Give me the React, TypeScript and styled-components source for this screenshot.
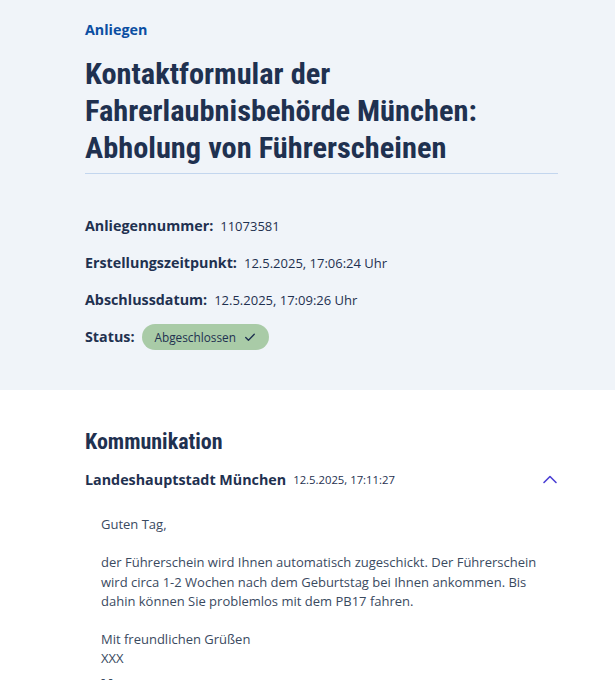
import React from "react";
import styled, { createGlobalStyle } from "styled-components";

const GlobalStyle = createGlobalStyle`
  html, body {
    margin: 0;
    padding: 0;
    background: #ffffff;
  }
  body {
    font-family: "Open Sans", "Noto Sans", sans-serif;
    color: #1f3150;
  }
`;

const Header = styled.section`
  background: #f0f4f9;
  padding: 20px 57px 43px 85px;
`;

const Kicker = styled.div`
  font-size: 14.3px;
  font-weight: 700;
  color: #0b4ea2;
  line-height: 20px;
`;

const Title = styled.h1`
  margin: 15px 0 0;
  font-family: "Roboto Condensed", Roboto, sans-serif;
  font-stretch: condensed;
  font-weight: 700;
  font-size: 30.4px;
  line-height: 37px;
  color: #1f3150;
  padding-bottom: 7px;
  border-bottom: 1px solid #c3d6ee;
`;

const Details = styled.dl`
  margin: 42px 0 0;
  display: flex;
  flex-direction: column;
  gap: 17px;
`;

const Row = styled.div`
  display: flex;
  align-items: baseline;
  gap: 7px;
`;

const Label = styled.dt`
  font-size: 14.3px;
  font-weight: 700;
  color: #1f3150;
  line-height: 20px;
`;

const Value = styled.dd`
  margin: 0;
  font-size: 13px;
  color: #1f3150;
  line-height: 20px;
`;

const Badge = styled.span`
  display: inline-flex;
  align-items: center;
  gap: 8px;
  height: 26px;
  margin: -3px 0;
  padding: 0 13px;
  border-radius: 13px;
  background: #a9cba7;
  font-size: 11.8px;
  color: #1f3150;
`;

const Section = styled.section`
  padding: 38px 57px 0 85px;
`;

const SectionTitle = styled.h2`
  margin: 0;
  font-family: "Roboto Condensed", Roboto, sans-serif;
  font-stretch: condensed;
  font-weight: 700;
  font-size: 22px;
  line-height: 28px;
  color: #1f3150;
`;

const MessageHead = styled.div`
  display: flex;
  align-items: center;
  margin-top: 11px;
  height: 24px;
`;

const Sender = styled.span`
  font-size: 14.3px;
  font-weight: 700;
  color: #1f3150;
`;

const Stamp = styled.span`
  margin-left: 7px;
  font-size: 11.3px;
  color: #1f3150;
`;

const Toggle = styled.button`
  margin-left: auto;
  border: 0;
  background: none;
  padding: 0;
  display: flex;
  color: #4b3fd4;
  cursor: pointer;
`;

const Body = styled.div`
  padding: 24px 0 0 16px;
  font-size: 13px;
  line-height: 19.2px;
  color: #3a4a5f;
  p {
    margin: 0 0 19.2px;
  }
`;

const Check = () => (
  <svg width="12" height="12" viewBox="0 0 14 14" fill="none">
    <path d="M2 7.5l3.2 3.2L12 3.8" stroke="#1f3150" strokeWidth="1.6" strokeLinecap="round" strokeLinejoin="round" />
  </svg>
);

const ChevronUp = () => (
  <svg width="16" height="10" viewBox="0 0 16 10" fill="none">
    <path d="M2 8.5L8 2.5l6 6" stroke="currentColor" strokeWidth="1.6" strokeLinecap="round" strokeLinejoin="round" />
  </svg>
);

const details = [
  { label: "Anliegennummer:", value: "11073581" },
  { label: "Erstellungszeitpunkt:", value: "12.5.2025, 17:06:24 Uhr" },
  { label: "Abschlussdatum:", value: "12.5.2025, 17:09:26 Uhr" },
];

export default function App() {
  return (
    <>
      <GlobalStyle />
      <Header>
        <Kicker>Anliegen</Kicker>
        <Title>
          Kontaktformular der Fahrerlaubnisbehörde München: Abholung von Führerscheinen
        </Title>
        <Details>
          {details.map((d) => (
            <Row key={d.label}>
              <Label>{d.label}</Label>
              <Value>{d.value}</Value>
            </Row>
          ))}
          <Row>
            <Label>Status:</Label>
            <Value>
              <Badge>
                Abgeschlossen <Check />
              </Badge>
            </Value>
          </Row>
        </Details>
      </Header>
      <Section>
        <SectionTitle>Kommunikation</SectionTitle>
        <MessageHead>
          <Sender>Landeshauptstadt München</Sender>
          <Stamp>12.5.2025, 17:11:27</Stamp>
          <Toggle aria-label="Einklappen">
            <ChevronUp />
          </Toggle>
        </MessageHead>
        <Body>
          <p>Guten Tag,</p>
          <p>
            der Führerschein wird Ihnen automatisch zugeschickt. Der Führerschein wird circa 1-2 Wochen
            nach dem Geburtstag bei Ihnen ankommen. Bis dahin können Sie problemlos mit dem PB17 fahren.
          </p>
          <p>
            Mit freundlichen Grüßen
            <br />
            XXX
            <br />- -
          </p>
        </Body>
      </Section>
    </>
  );
}
